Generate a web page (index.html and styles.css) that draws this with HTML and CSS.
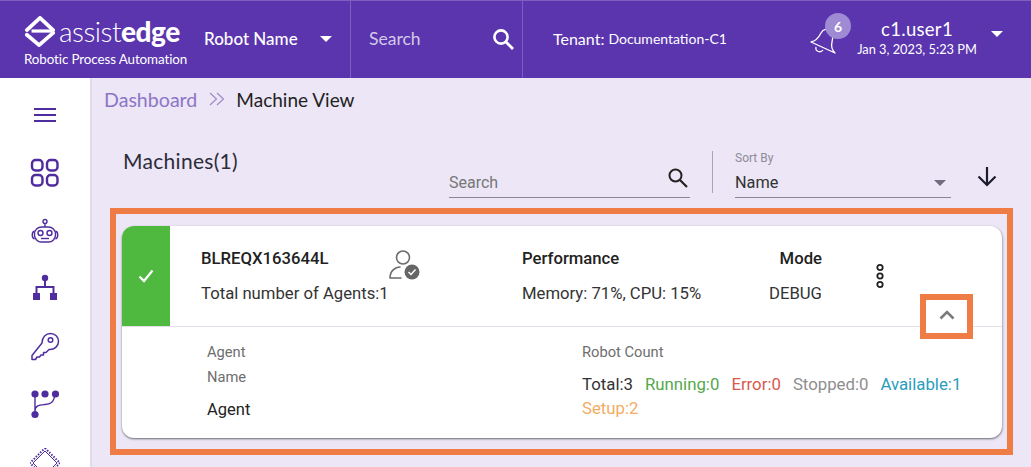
FILE: index.html
```html
<!DOCTYPE html>
<html lang="en">
<head>
<meta charset="utf-8">
<title>Machine View</title>
<link rel="stylesheet" href="styles.css">
</head>
<body>
<header class="topbar">
  <div class="brand">
    <div class="brand-row">
      <svg class="brand-mark" width="32" height="31" viewBox="0 0 32 33"><path d="M2 15 16 2 30 15" fill="none" stroke="#fff" stroke-width="4" stroke-linejoin="round" stroke-linecap="round"/><path d="M7 16H31" stroke="#fff" stroke-width="3.4"/><path d="M2 20 15 31 30 18" fill="none" stroke="#fff" stroke-width="4" stroke-linejoin="round" stroke-linecap="round"/></svg>
      <span class="brand-name"><span class="brand-light">assist</span><b>edge</b></span>
    </div>
    <div class="brand-sub">Robotic Process Automation</div>
  </div>
  <div class="robot-select"><span>Robot Name</span><i class="caret"></i></div>
  <div class="top-search">
    <span>Search</span>
    <svg width="24" height="24" viewBox="0 0 24 24"><circle cx="10" cy="10" r="6.6" fill="none" stroke="#fff" stroke-width="2.6"/><path d="M15 15l7 7" stroke="#fff" stroke-width="2.8"/></svg>
  </div>
  <div class="tenant"><span class="tenant-key">Tenant:</span> Documentation-C1</div>
  <div class="user-area">
    <div class="bell">
      <svg width="32" height="32" viewBox="0 0 32 32"><path d="M1 15C6 14 9 10 11 6C13 2 18 1 21 4C24 7 23 11 22 15C21 19 22 23 25 26ZM6 20C5 25 11 26 13 23" fill="none" stroke="#fff" stroke-width="1.3" stroke-linejoin="round"/></svg>
      <span class="badge">6</span>
    </div>
    <div class="user-info">
      <div class="user-name">c1.user1</div>
      <div class="user-date">Jan 3, 2023, 5:23 PM</div>
    </div>
    <i class="caret caret-user"></i>
  </div>
</header>
<div class="shell">
  <nav class="rail">
    <svg class="rail-menu" width="24" height="16" viewBox="0 0 24 16"><path d="M1 2H23M1 8H23M1 14H23" stroke="#4f2d9f" stroke-width="2"/></svg>
    <svg class="rail-icon" width="30" height="30" viewBox="0 0 30 30"><g fill="none" stroke="#4f2d9f" stroke-width="2.4"><rect x="2" y="2" width="10.5" height="10.5" rx="3.5"/><rect x="17" y="2" width="10.5" height="10.5" rx="3.5"/><rect x="2" y="17" width="10.5" height="10.5" rx="3.5"/><rect x="17" y="17" width="10.5" height="10.5" rx="3.5"/></g></svg>
    <svg class="rail-icon" width="30" height="30" viewBox="0 -2 30 30"><g fill="none" stroke="#4f2d9f" stroke-width="1.4"><circle cx="15" cy="3.5" r="2"/><path d="M15 5.5V9"/><rect x="4.5" y="9" width="21" height="15" rx="7"/><path d="M4.5 13C1.500 14 1.500 20 4.500 21M25.500 13C28.500 14 28.500 20 25.500 21"/><circle cx="10.500" cy="15" r="2.500"/><circle cx="19.500" cy="15" r="2.500"/><path d="M11 20.500H19"/></g></svg>
    <svg class="rail-icon" width="30" height="30" viewBox="0 0 30 30"><circle cx="15" cy="4" r="3.200" fill="#4f2d9f"/><path d="M15 6V12M6.500 20V13H23.500V20" fill="none" stroke="#4f2d9f" stroke-width="2"/><rect x="3" y="19" width="7" height="7" fill="#4f2d9f"/><rect x="20" y="19" width="7" height="7" fill="#4f2d9f"/></svg>
    <svg class="rail-icon" width="30" height="30" viewBox="0 0 30 30"><g fill="none" stroke="#4f2d9f" stroke-width="1.500" stroke-linejoin="round"><path d="M12 11C12 5 16 1.500 20.500 1.500C25 1.500 28.500 5 28.500 9.500C28.500 14 24.500 18 19 17.500L16 20.500H13.500V23H11L9.500 25H7L5.500 27.500H2V23.500Z"/><circle cx="20.500" cy="8" r="2.300"/></g></svg>
    <svg class="rail-icon" width="30" height="30" viewBox="0 0 30 30"><g fill="#4f2d9f"><circle cx="5" cy="4" r="3.600"/><circle cx="15" cy="4" r="3.600"/><circle cx="25.500" cy="4" r="3.600"/><circle cx="5" cy="24.500" r="3.600"/></g><path d="M5 4V24M5 21C5 15 10 15 15 14.500C20 14 24 13 25 4" fill="none" stroke="#4f2d9f" stroke-width="1.400"/></svg>
    <svg class="rail-icon rail-chip" width="30" height="30" viewBox="0 0 30 30"><g fill="none" stroke="#4f2d9f"><path d="M15 3 27 15 15 27 3 15Z" stroke-width="1"/><path d="M15 0 30 15 15 30 0 15Z" stroke-width="2" stroke-dasharray="1.500 1.500"/></g></svg>
  </nav>
  <main class="content">
    <div class="crumbs">
      <span class="crumb-link">Dashboard</span>
      <svg width="16" height="14" viewBox="0 0 16 14"><path d="M1 1 7.500 7 1 13M8 1 14.500 7 8 13" fill="none" stroke="#9a88c8" stroke-width="1.100"/></svg>
      <span class="crumb-current">Machine View</span>
    </div>
    <div class="toolbar">
      <h1 class="title">Machines(1)</h1>
      <div class="tool-search">
        <span>Search</span>
        <svg width="22" height="22" viewBox="0 0 22 22"><circle cx="8.500" cy="8.500" r="6" fill="none" stroke="#222" stroke-width="2"/><path d="M13 13l7 7" stroke="#222" stroke-width="2.200"/></svg>
      </div>
      <div class="tool-sep"></div>
      <div class="sort">
        <div class="sort-label">Sort By</div>
        <div class="sort-value"><span>Name</span><i class="caret caret-grey"></i></div>
      </div>
      <svg class="sort-dir" width="24" height="24" viewBox="0 0 24 24"><path d="M12 3V21M3.500 12.500 12 21l8.500-8.500" fill="none" stroke="#1d1b2e" stroke-width="2.200"/></svg>
    </div>
    <div class="highlight">
      <section class="card">
        <div class="card-top">
          <div class="status"><svg width="18" height="18" viewBox="0 0 18 18"><path d="M2.500 9.500 7 14 15.500 3.500" fill="none" stroke="#fff" stroke-width="2.200"/></svg></div>
          <div class="machine">
            <div class="strong">BLREQX163644L</div>
            <div class="plain">Total number of Agents:1</div>
          </div>
          <svg class="agent-icon" width="32" height="32" viewBox="0 0 32 32"><circle cx="15" cy="7.500" r="6.500" fill="none" stroke="#6b6b6b" stroke-width="1.600"/><path d="M2 28C2 21 7 17 12 17M2 28H13" fill="none" stroke="#6b6b6b" stroke-width="1.600" stroke-linecap="round"/><circle cx="24" cy="22" r="7.500" fill="#666"/><path d="M20.500 22l2.500 2.500 4.500-5" fill="none" stroke="#fff" stroke-width="1.500"/></svg>
          <div class="perf">
            <div class="strong">Performance</div>
            <div class="plain">Memory: 71%, CPU: 15%</div>
          </div>
          <div class="mode">
            <div class="strong">Mode</div>
            <div class="plain">DEBUG</div>
          </div>
          <svg class="more" width="10" height="26" viewBox="0 0 10 26"><g fill="none" stroke="#222" stroke-width="1.800"><circle cx="5" cy="4.500" r="2.700"/><circle cx="5" cy="13" r="2.700"/><circle cx="5" cy="21.500" r="2.700"/></g></svg>
          <div class="expander"><svg width="16" height="10" viewBox="0 0 16 10"><path d="M1.500 8.500 8 2l6.500 6.500" fill="none" stroke="#7a7a7a" stroke-width="2.600"/></svg></div>
        </div>
        <div class="card-body">
          <div class="agent-col">
            <div class="muted">Agent</div>
            <div class="muted">Name</div>
            <div class="agent-val">Agent</div>
          </div>
          <div class="count-col">
            <div class="muted">Robot Count</div>
            <div class="counts">
              <span class="c-total">Total:3</span><span class="c-run">Running:0</span><span class="c-err">Error:0</span><span class="c-stop">Stopped:0</span><span class="c-avail">Available:1</span><span class="c-setup">Setup:2</span>
            </div>
          </div>
        </div>
      </section>
    </div>
  </main>
</div>
</body>
</html>
```
FILE: styles.css
```css
* { box-sizing: border-box; }
html, body { margin: 0; height: 467px; overflow: hidden; }
body { background: #ece6f6; font-family: "Roboto", sans-serif; color: #222; }
h1 { margin: 0; font-weight: 400; }

.topbar { height: 78px; background: #5b35ae; border-top: 1px solid #7c5fc0; display: flex; color: #fff; font-family: "Lato", sans-serif; }
.brand { width: 190px; padding: 14px 0 0 24px; flex: none; }
.brand-row { display: flex; align-items: center; gap: 3px; height: 32px; }
.brand-mark { flex: none; }
.brand-name { font-size: 28px; line-height: 32px; letter-spacing: -0.5px; }
.brand-light { font-weight: 300; }
.brand-name b { font-weight: 900; }
.brand-sub { font-size: 13.4px; line-height: 16px; margin-top: 4px; letter-spacing: -0.1px; white-space: nowrap; }

.caret { display: block; width: 0; height: 0; border-left: 6px solid transparent; border-right: 6px solid transparent; border-top: 6px solid #fff; }
.robot-select { width: 161px; flex: none; padding: 0 18px 2px 14px; display: flex; align-items: center; justify-content: space-between; font-size: 17px; font-weight: 500; border-right: 1px solid #7c5fc0; }
.top-search { width: 172px; flex: none; padding: 0 7px 2px 18px; display: flex; align-items: center; justify-content: space-between; font-size: 17.500px; color: #d3c8ea; border-right: 1px solid #7c5fc0; }
.tenant { width: 287px; flex: none; padding: 0 0 2px 30px; display: flex; align-items: center; gap: 4px; font-size: 14px; white-space: nowrap; }
.tenant-key { font-size: 16px; }
.user-area { flex: 1; display: flex; align-items: center; }
.bell { position: relative; width: 32px; height: 32px; margin-top: 7px; flex: none; }
.badge { position: absolute; left: 15px; top: -14px; width: 26px; height: 26px; border-radius: 50%; background: #9f8ad4; display: flex; align-items: center; justify-content: center; font-size: 14px; font-weight: 700; }
.user-info { width: 124px; margin-left: 13px; text-align: center; flex: none; padding-bottom: 1px; }
.user-name { font-size: 18.500px; line-height: 21px; letter-spacing: 0.3px; }
.user-date { font-size: 12.800px; line-height: 19px; white-space: nowrap; }
.caret-user { margin: -12px 0 0 12px; }

.shell { display: flex; height: 389px; }
.rail { width: 92px; flex: none; background: #fff; border-right: 2px solid #e2dbef; display: flex; flex-direction: column; align-items: center; padding-top: 29px; overflow: hidden; }
.rail-menu { flex: none; margin-bottom: 35px; margin-left: -1px; }
.rail-icon { flex: none; margin-bottom: 28px; }
.rail-chip { margin-bottom: 0; }

.content { flex: 1; min-width: 0; }
.crumbs { display: flex; align-items: center; height: 44px; padding: 0 0 2px 12px; font-family: "Lato", sans-serif; font-size: 19.600px; gap: 11.500px; }
.crumb-link { color: #8c75c6; }
.crumb-current { color: #222; font-size: 19px; }

.toolbar { display: flex; height: 86px; padding-left: 31px; }
.title { font-family: "Lato", sans-serif; font-size: 21px; line-height: 24px; margin-top: 27px; width: 326px; flex: none; letter-spacing: 0.3px; color: #2c2c3a; }
.tool-search { width: 241px; height: 34px; margin-top: 42px; flex: none; border-bottom: 1px solid #8a8599; display: flex; align-items: flex-end; justify-content: space-between; padding: 0 1px 3px 0; font-size: 16px; line-height: 22px; color: #777; }
.tool-search svg { margin-bottom: 5px; }
.tool-sep { width: 1px; height: 42px; background: #a9a4b8; margin: 29px 22px 0; flex: none; }
.sort { width: 216px; flex: none; margin-top: 28px; height: 48px; border-bottom: 1px solid #8a8599; }
.sort-label { font-size: 12px; line-height: 16px; color: #8d8a99; margin-bottom: 5px; }
.sort-value { display: flex; align-items: center; justify-content: space-between; font-size: 16.300px; line-height: 24px; color: #333; padding-right: 5px; }
.caret-grey { border-top-color: #716d80; }
.sort-dir { margin: 42px 0 0 24px; flex: none; }

.highlight { margin-left: 18px; width: 903px; height: 247px; border: 6px solid #f07c45; padding: 12px 5px 0 6px; }
.card { background: #fff; border-radius: 12px; height: 212px; box-shadow: 0 1px 2px rgba(0,0,0,.45), 1px 1px 3px rgba(0,0,0,.15); }
.card-top { height: 101px; border-bottom: 1px solid #e4e1ea; display: flex; position: relative; font-size: 16.700px; }
.status { width: 48px; background: #4fb93f; border-top-left-radius: 12px; display: flex; align-items: center; justify-content: center; flex: none; }
.strong { font-weight: 500; line-height: 20px; margin-top: 23px; color: #222; }
.plain { line-height: 20px; margin-top: 15px; color: #333; }
.machine { width: 187px; margin-left: 31px; flex: none; white-space: nowrap; }
.agent-icon { margin-top: 24px; flex: none; }
.perf { width: 200px; margin-left: 102px; flex: none; white-space: nowrap; }
.mode { width: 100px; flex: none; text-align: right; }
.more { margin: 37px 0 0 53px; flex: none; }
.expander { position: absolute; left: 798px; top: 68px; width: 53px; height: 45px; border: 6px solid #f07c45; background: #fff; display: flex; align-items: center; justify-content: center; padding-bottom: 4px; z-index: 1; }

.card-body { display: flex; padding: 16px 0 0 85px; font-size: 14.700px; }
.muted { color: #6e6e6e; line-height: 18px; margin-bottom: 7px; }
.agent-col { width: 375px; flex: none; }
.agent-val { font-size: 16.500px; line-height: 20px; margin-top: 14px; color: #222; }
.count-col { width: 400px; flex: none; }
.count-col .muted { margin-bottom: 0; }
.counts { display: flex; flex-wrap: wrap; column-gap: 12px; font-size: 16.800px; line-height: 24px; margin-top: 11px; }
.c-total { color: #333; }
.c-run { color: #55a84c; }
.c-err { color: #d9584e; }
.c-stop { color: #8e8e8e; }
.c-avail { color: #2a9dbd; }
.c-setup { color: #f2ad62; width: 100%; }
```
